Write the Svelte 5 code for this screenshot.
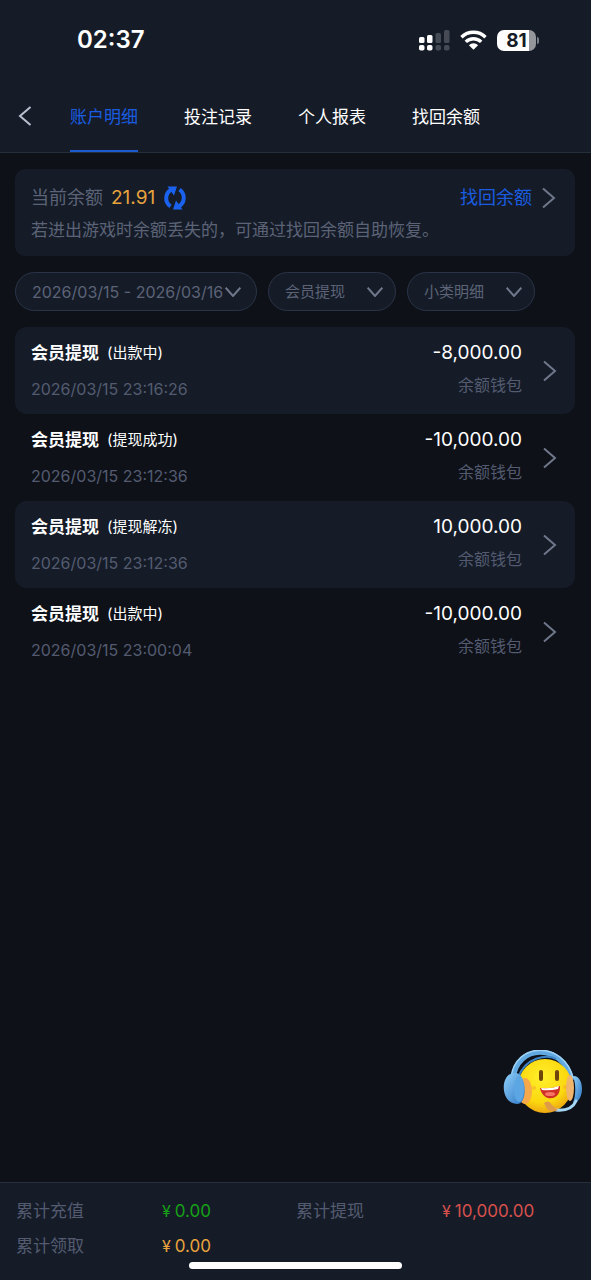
<script lang="ts">
  type Entry = {
    status: string;
    time: string;
    amount: string;
  };

  const tabs = ['账户明细', '投注记录', '个人报表', '找回余额'];
  let active = $state(0);

  let mainType = $state('会员提现');
  let subType = $state('小类明细');

  const entries: Entry[] = [
    { status: '出款中', time: '2026/03/15 23:16:26', amount: '-8,000.00' },
    { status: '提现成功', time: '2026/03/15 23:12:36', amount: '-10,000.00' },
    { status: '提现解冻', time: '2026/03/15 23:12:36', amount: '10,000.00' },
    { status: '出款中', time: '2026/03/15 23:00:04', amount: '-10,000.00' }
  ];

  const totals = [
    { label: '累计充值', value: '0.00', tone: 'green' },
    { label: '累计提现', value: '10,000.00', tone: 'red' },
    { label: '累计领取', value: '0.00', tone: 'gold' }
  ];
</script>

{#snippet chevronRight()}
  <svg class="chevron-right" width="14" height="22" viewBox="0 0 14 22" aria-hidden="true">
    <path d="M1 1.5l11 9.5-11 9.5" />
  </svg>
{/snippet}

{#snippet chevronDown()}
  <svg class="chevron-down" width="16" height="10" viewBox="0 0 16 10" aria-hidden="true">
    <path d="M.7.7L8 9 15.3.7" />
  </svg>
{/snippet}

<div class="page">
  <header>
    <div class="status-bar">
      <span class="clock">02:37</span>
      <div class="indicators">
        <svg width="31" height="21" viewBox="0 0 31 21" aria-hidden="true">
          <g fill="#fff">
            <rect x="0" y="7" width="5.5" height="6" rx="1.5" />
            <rect x="0" y="15" width="5.5" height="5.5" rx="1.8" />
            <rect x="8" y="5" width="5.5" height="8" rx="1.5" />
            <rect x="8" y="15" width="5.5" height="5.5" rx="1.8" />
          </g>
          <g fill="#454a54">
            <rect x="16.5" y="3" width="5.5" height="10" rx="1.5" />
            <rect x="16.5" y="15" width="5.5" height="5.5" rx="1.8" />
            <rect x="25" y="0" width="5.5" height="13" rx="1.5" />
            <rect x="25" y="15" width="5.5" height="5.5" rx="1.8" />
          </g>
        </svg>
        <svg width="27" height="20" viewBox="0 0 27 20" aria-hidden="true">
          <g fill="none" stroke="#fff" stroke-width="3.4">
            <path d="M1.5 7.2a17 17 0 0 1 24 0" />
            <path d="M5.8 11.9a11 11 0 0 1 15.4 0" />
          </g>
          <path fill="#fff" d="M8.9 15.2a6.5 6.5 0 0 1 9.2 0L13.5 19.7z" />
        </svg>
        <div class="battery">
          <span class="level">81</span>
          <span class="cap"></span>
        </div>
      </div>
    </div>
    <nav>
      <button class="back" aria-label="返回">
        <svg width="14" height="20" viewBox="0 0 14 20" aria-hidden="true">
          <path d="M12.5 1L2 10l10.5 9" />
        </svg>
      </button>
      {#each tabs as tab, i}
        <a href="#tab-{i}" class:active={active === i} onclick={() => (active = i)}>{tab}</a>
      {/each}
    </nav>
  </header>

  <main>
    <section class="balance">
      <div class="balance-row">
        <span>当前余额</span>
        <span class="balance-value">21.91</span>
        <button class="refresh" aria-label="刷新">
          <svg width="24" height="24" viewBox="0 0 24 24" aria-hidden="true">
            <path class="arc" d="M7.500 20.300A9.800 9.800 0 0 1 8.500 3.500" />
            <path class="arc" d="M16.500 3.700A9.800 9.800 0 0 1 15.500 20.500" />
            <path d="M4.500.5L14 .5 11 9.500z" />
            <path d="M19.500 23.500L10 23.500 13 14.500z" />
          </svg>
        </button>
        <a class="recover" href="#recover">找回余额 {@render chevronRight()}</a>
      </div>
      <p>若进出游戏时余额丢失的，可通过找回余额自助恢复。</p>
    </section>

    <div class="filters">
      <button class="pill date">2026/03/15 - 2026/03/16 {@render chevronDown()}</button>
      <div class="pill">
        <select aria-label="类型" bind:value={mainType}>
          <option>会员提现</option>
        </select>
        {@render chevronDown()}
      </div>
      <div class="pill">
        <select aria-label="小类" bind:value={subType}>
          <option>小类明细</option>
        </select>
        {@render chevronDown()}
      </div>
    </div>

    <ul class="entries">
      {#each entries as entry, i}
        <li>
          <a href="#entry-{i}">
            <div class="info">
              <div class="title"><strong>会员提现</strong><span>({entry.status})</span></div>
              <time>{entry.time}</time>
            </div>
            <div class="sum">
              <span class="amount">{entry.amount}</span>
              <span class="wallet">余额钱包</span>
            </div>
            {@render chevronRight()}
          </a>
        </li>
      {/each}
    </ul>

    <button class="service" aria-label="在线客服">
      <svg width="80" height="66" viewBox="0 0 80 66" aria-hidden="true">
        <defs>
          <radialGradient id="face" cx="0.45" cy="0.35" r="0.7">
            <stop offset="0" stop-color="#fff02c" />
            <stop offset="0.65" stop-color="#fbd80f" />
            <stop offset="1" stop-color="#eb9c12" />
          </radialGradient>
          <linearGradient id="cup" x1="0" y1="0" x2="1" y2="1">
            <stop offset="0" stop-color="#8fd0fa" />
            <stop offset="1" stop-color="#2d76c4" />
          </linearGradient>
        </defs>
        <path d="M10 30C13-7 60-7 69 30" fill="none" stroke="#62a9e2" stroke-width="5" />
        <path d="M8 28C12-9 61-9 70 28" fill="none" stroke="#9ed3f6" stroke-width="1.5" />
        <circle cx="42" cy="36" r="27" fill="url(#face)" />
        <path d="M15 28C22 7 44 4 53 9" fill="none" stroke="#3d83c4" stroke-width="2" />
        <ellipse cx="22" cy="41" rx="7" ry="13" fill="#f6a94b" />
        <ellipse cx="67" cy="38" rx="4" ry="13" fill="#f0b46c" />
        <path d="M13 23C-3 21-4 53 14 54c11 0 10-30-1-31z" fill="url(#cup)" />
        <ellipse cx="16" cy="39" rx="5" ry="13" fill="#5da6e4" />
        <path d="M70 26c12-1 12 26 0 27 3-8 3-19 0-27z" fill="url(#cup)" />
        <path d="M73 51C70 58 64 61 53 60" fill="none" stroke="#a5d6f5" stroke-width="3" stroke-linecap="round" />
        <path d="M41 53q5-4 8 2l6 5q-6 3-11-1z" fill="#df9c48" />
        <rect x="36" y="20" width="4" height="11" rx="2" fill="#70450c" />
        <rect x="52" y="20" width="4" height="11" rx="2" fill="#70450c" />
        <path d="M37 38q10 1 20-2c1 15-17 17-20 2z" fill="#cf2f24" />
        <path d="M38 38q10 1 18-2l-1 3q-8 2-16 1z" fill="#fff" />
        <ellipse cx="47" cy="44" rx="5" ry="2" fill="#f67566" />
        <circle cx="31" cy="38" r="2" fill="#f5a32d" opacity="0.5" />
        <circle cx="62" cy="37" r="2" fill="#f5a32d" opacity="0.5" />
      </svg>
    </button>
  </main>

  <footer>
    <dl>
      {#each totals as total}
        <dt>{total.label}</dt>
        <dd class={total.tone}><span class="yen">¥</span>{total.value}</dd>
      {/each}
    </dl>
    <div class="home-bar"></div>
  </footer>
</div>

<style>
  :global(body) {
    margin: 0;
    background: #0e1118;
  }

  .page {
    display: flex;
    flex-direction: column;
    min-height: 100vh;
    color: #fff;
    font-family: Inter, 'Noto Sans CJK SC', sans-serif;
    font-size: 16px;
    line-height: 24px;
  }

  button,
  select {
    margin: 0;
    padding: 0;
    border: 0;
    background: none;
    color: inherit;
    font: inherit;
    cursor: pointer;
  }

  a {
    color: inherit;
    text-decoration: none;
  }

  svg {
    display: block;
    flex: none;
  }

  header {
    background: #151c28;
    border-bottom: 1px solid #233039;
  }

  .status-bar {
    display: flex;
    align-items: center;
    justify-content: space-between;
    height: 80px;
    padding: 0 52px 0 77px;
  }

  .clock {
    font-size: 24px;
    font-weight: 600;
  }

  .indicators {
    display: flex;
    align-items: center;
    gap: 10px;
  }

  .battery {
    display: flex;
    align-items: center;
    gap: 1px;
  }

  .level {
    width: 39px;
    border-radius: 7px;
    background: linear-gradient(to right, #fff 82%, #95969c 82%);
    color: #151c28;
    font-size: 19px;
    font-weight: 700;
    line-height: 21px;
    text-align: center;
  }

  .cap {
    width: 2px;
    height: 7px;
    border-radius: 0 2px 2px 0;
    background: #7b7e85;
  }

  nav {
    display: flex;
    align-items: stretch;
    gap: 46px;
    height: 72px;
    padding-left: 18px;
  }

  .back {
    display: flex;
    align-items: center;
    width: 14px;
    margin-right: -8px;
  }

  .back path {
    fill: none;
    stroke: #b9bfcc;
    stroke-width: 2;
  }

  nav a {
    box-sizing: border-box;
    height: 72px;
    border-bottom: 2px solid transparent;
    font-size: 17px;
    line-height: 74px;
  }

  nav a.active {
    border-color: #1d5bd0;
    color: #1a5ce0;
  }

  main {
    position: relative;
    flex: 1;
    padding: 16px 16px 0 15px;
  }

  .balance {
    padding: 17px 16px 14px;
    border-radius: 10px;
    background: #151c28;
    color: #5c6377;
  }

  .balance-row {
    display: flex;
    align-items: center;
    gap: 8px;
    font-size: 18px;
  }

  .balance-value {
    color: #e8a33d;
    font-size: 19px;
  }

  .refresh path {
    fill: #1a62ee;
  }

  .refresh .arc {
    fill: none;
    stroke: #1a62ee;
    stroke-width: 4;
  }

  .recover {
    display: flex;
    align-items: center;
    gap: 10px;
    margin-left: auto;
    padding-right: 3px;
    color: #1a5ce0;
  }

  .balance p {
    margin: 8px 0 0;
    font-size: 17px;
  }

  .chevron-right path,
  .chevron-down path {
    fill: none;
    stroke: #6f778a;
    stroke-width: 2;
  }

  .filters {
    display: flex;
    gap: 11px;
    margin: 16px 0;
  }

  .pill {
    display: flex;
    box-sizing: border-box;
    align-items: center;
    width: 128px;
    height: 39px;
    padding: 0 12px 0 16px;
    border: 1px solid #2b3447;
    border-radius: 20px;
    background: #151c28;
    color: #5c6377;
    font-size: 15px;
  }

  .pill.date {
    justify-content: space-between;
    width: 242px;
    padding-right: 15px;
    font-size: 16px;
    white-space: nowrap;
  }

  select {
    flex: 1;
    min-width: 0;
    appearance: none;
    outline: none;
  }

  .entries {
    display: flex;
    flex-direction: column;
    margin: 0;
    padding: 0;
    list-style: none;
  }

  .entries a {
    display: flex;
    box-sizing: border-box;
    align-items: center;
    height: 87px;
    padding: 0 18px 0 16px;
    border-radius: 12px;
  }

  .entries li:nth-child(odd) a {
    background: #151c28;
  }

  .info,
  .sum {
    display: flex;
    flex-direction: column;
  }

  .info {
    flex: 1;
    gap: 12px;
  }

  .sum {
    align-items: flex-end;
    gap: 8px;
    margin-right: 21px;
    padding-bottom: 4px;
  }

  .title {
    display: flex;
    gap: 8px;
    font-size: 15px;
  }

  .title strong {
    font-size: 17px;
    font-weight: 700;
  }

  time,
  .wallet {
    color: #545b70;
  }

  .amount {
    font-size: 19px;
  }

  .service {
    position: absolute;
    right: 8px;
    bottom: 66px;
  }

  footer {
    position: sticky;
    bottom: 0;
    padding: 16px 16px 11px;
    border-top: 1px solid #27303a;
    background: #151c28;
    font-size: 17px;
  }

  dl {
    display: grid;
    grid-template-columns: 146fr 134fr 146fr 133fr;
    row-gap: 11px;
    margin: 0;
  }

  dt {
    color: #545b70;
  }

  dd {
    margin: 0;
  }

  .yen {
    margin-right: 4px;
    font-size: 16px;
  }

  .green {
    color: #16a116;
  }

  .red {
    color: #d8504c;
  }

  .gold {
    color: #e8a33d;
  }

  .home-bar {
    width: 38%;
    height: 7px;
    margin: 4px auto 0;
    border-radius: 4px;
    background: #fff;
  }
</style>
